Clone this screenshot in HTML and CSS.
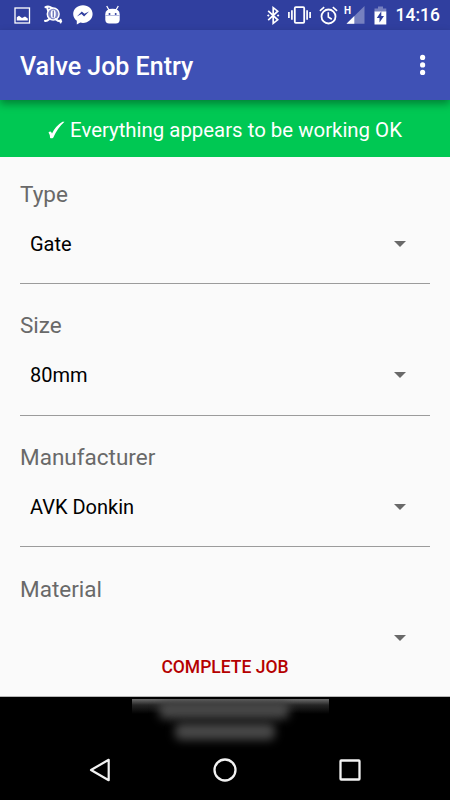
FILE: index.html
```
<!DOCTYPE html>
<html lang="en">
<head>
    <meta charset="utf-8">
    <meta name="viewport" content="width=device-width, initial-scale=1">
    <title>Valve Job Entry</title>
    <link rel="stylesheet" href="styles.css">
</head>
<body>
<div class="screen">
    <!-- status bar -->
    <div class="status-bar">
        <div class="notifications">
            <svg class="icon-image" width="17" height="17" viewBox="0 0 17 17">
                <rect x="1" y="1" width="14.5" height="15" fill="none" stroke="#fff" stroke-width="1.3"/>
                <path fill="#fff" d="M2.8 13.5V10.3L5 8.7L8 11L11 9.5L13.8 11.5V13.5Z"/>
            </svg>
            <svg class="icon-tool" width="20" height="20" viewBox="0 0 20 20">
                <circle cx="10.2" cy="9" r="5.9" fill="#8088c8" stroke="#fff" stroke-width="1.5"/>
                <ellipse cx="10.2" cy="9" rx="2.5" ry="4.2" fill="#fff"/>
                <path d="M10.2 5.5V12.5" stroke="#303f9f" stroke-width="1"/>
                <path fill="none" stroke="#fff" stroke-width="2" stroke-linecap="round" d="M2.5 2.2C5 .8 7.5 2 9 3M2 15.8C4 16.5 5.2 15 6.5 13.8M12.5 14C14 15.5 15.5 16.5 18.2 16.2M17.6 14.8V17.5M4 2.2L5 5.5"/>
            </svg>
            <svg class="icon-messenger" width="20" height="20" viewBox="0 0 20 20">
                <path fill="#fff" d="M10 .2C4.5.2.2 4.1.2 9C.2 11.8 1.6 14.2 3.8 15.8V19.6L7.3 17.5C8.2 17.8 9.1 17.9 10 17.9C15.5 17.9 19.6 13.9 19.6 9C19.6 4.1 15.5.2 10 .2Z"/>
                <path fill="#303f9f" d="M3.9 11.6L8.8 6.4L11.4 8.8L16 6.4L11.1 11.6L8.5 9.1Z"/>
            </svg>
            <svg class="icon-android" width="15" height="19" viewBox="0 0 15 19">
                <path stroke="#fff" stroke-width="1.3" d="M1.7 1L4 5M13.3 1L11 5"/>
                <path fill="#fff" d="M.3 9.2Q.3 3.7 7.5 3.7Q14.7 3.7 14.7 9.2V14.5Q14.7 18.4 10.8 18.4H4.2Q.3 18.4.3 14.5Z"/>
                <path stroke="#a3a9d7" stroke-width=".8" d="M.3 10.5H14.7"/>
                <circle cx="4.5" cy="9" r="1" fill="#303f9f"/>
                <circle cx="10.7" cy="9" r="1" fill="#303f9f"/>
            </svg>
        </div>
        <div class="system">
            <svg class="icon-bluetooth" width="13" height="19" viewBox="0 0 13 19">
                <path fill="none" stroke="#fff" stroke-width="1.7" d="M1.2 4.8L10.7 13.8L6.2 17.3V1.7L10.7 5.2L1.2 14.2"/>
                <path fill="#fff" d="M0 9.5L1.3 8.2L2.6 9.5L1.3 10.8ZM9.8 9.5L11.1 8.2L12.4 9.5L11.1 10.8Z"/>
            </svg>
            <svg class="icon-vibrate" width="23" height="18" viewBox="0 0 23 18">
                <rect x="6.8" y="1.2" width="9.4" height="15.6" rx="1" fill="none" stroke="#fff" stroke-width="1.8"/>
                <path stroke="#fff" stroke-width="1.7" d="M.9 6V12M3.9 4.2V13.8M19.1 4.2V13.8M22.1 6V12"/>
            </svg>
            <svg class="icon-alarm" width="19" height="19" viewBox="0 0 19 19">
                <circle cx="9.5" cy="10.5" r="7" fill="none" stroke="#fff" stroke-width="1.8"/>
                <path fill="none" stroke="#fff" stroke-width="1.6" d="M9.3 6.3V11L12.8 13.2M.9 4.8L5.2 1.2M18.1 4.8L13.8 1.2"/>
            </svg>
            <div class="signal">
                <span class="signal-type">H</span>
                <svg width="19" height="18" viewBox="0 0 19 18">
                    <path fill="#7680bf" d="M18.5 0V17.7H.5Z"/>
                    <path fill="#fff" d="M8.3 10V17.7H.5Z"/>
                </svg>
            </div>
            <svg class="icon-battery" width="13" height="19" viewBox="0 0 13 19">
                <path fill="#7680bf" d="M4 .5H9V2.5H12.3V6H.5V2.5H4Z"/>
                <path fill="#fff" d="M.5 5.5H12.3V18.5H.5Z"/>
                <path fill="#303f9f" d="M7.3 5.2V10H10L5.5 16.5V12H2.8Z"/>
            </svg>
            <span class="clock">14:16</span>
        </div>
    </div>

    <!-- toolbar -->
    <div class="toolbar">
        <h1>Valve Job Entry</h1>
        <svg class="overflow" width="8" height="24" viewBox="0 0 8 24" fill="#fff">
            <circle cx="3.6" cy="4.4" r="2.6"/>
            <circle cx="3.6" cy="11.9" r="2.6"/>
            <circle cx="3.6" cy="19.4" r="2.6"/>
        </svg>
    </div>

    <div class="banner">
        <svg class="tick" width="17" height="18" viewBox="0 0 17 18">
            <path fill="#fff" d="M.5 11.4Q2.9 9.2 4 12.6Q7.5 5 14.5.8H16.5Q9.7 6.8 5.2 16.7Q3.7 17.7 2.1 16.9Q1.8 12.8.5 11.4Z"/>
        </svg>
        <span>Everything appears to be working OK</span>
    </div>

    <!-- form -->
    <div class="form">
        <div class="field">
            <div class="label">Type</div>
            <div class="spinner"><span>Gate</span><i class="arrow"></i></div>
        </div>
        <div class="field">
            <div class="label">Size</div>
            <div class="spinner"><span>80mm</span><i class="arrow"></i></div>
        </div>
        <div class="field">
            <div class="label">Manufacturer</div>
            <div class="spinner"><span>AVK Donkin</span><i class="arrow"></i></div>
        </div>
        <div class="field">
            <div class="label">Material</div>
            <div class="spinner"><span></span><i class="arrow"></i></div>
        </div>
        <div class="complete">COMPLETE JOB</div>
    </div>

    <!-- system area -->
    <div class="footer">
        <div class="toast">
            <div class="smudge wide"></div>
            <div class="smudge"></div>
        </div>
        <div class="nav">
            <svg width="24" height="26" viewBox="0 0 24 26">
                <path fill="none" stroke="#f2f2f2" stroke-width="2.2" stroke-linejoin="round" d="M3 13L20.7 2.8V23.2Z"/>
            </svg>
            <svg width="24" height="26" viewBox="0 0 24 26">
                <circle cx="12" cy="13" r="10.5" fill="none" stroke="#f2f2f2" stroke-width="2.3"/>
            </svg>
            <svg width="24" height="26" viewBox="0 0 24 26">
                <rect x="2.5" y="3.5" width="19" height="19" rx=".7" fill="none" stroke="#f2f2f2" stroke-width="2.3"/>
            </svg>
        </div>
    </div>
</div>
</body>
</html>
```
FILE: styles.css
```
* {
    margin: 0;
    padding: 0;
    box-sizing: border-box;
}
body {
    background: #000;
    font-family: Roboto, "Liberation Sans", sans-serif;
}
svg {
    display: block;
    flex-shrink: 0;
}
.screen {
    display: flex;
    flex-direction: column;
    width: 450px;
    height: 800px;
    overflow: hidden;
}

/* status bar */
.status-bar {
    display: flex;
    justify-content: space-between;
    height: 30px;
    padding: 0 10px 0 14px;
    background: #303f9f;
    color: #fff;
}
.notifications, .system {
    display: flex;
    align-items: center;
}
.icon-tool {margin-left: 12px;}
.icon-messenger {margin-left: 10px;}
.icon-android {margin: -1px 0 0 12px;}
.icon-vibrate {margin-left: 8px;}
.icon-alarm {margin-left: 8px;}
.icon-battery {margin-left: 9px;}
.signal {
    display: flex;
    align-items: flex-start;
    margin-left: 6px;
}
.signal svg {margin-left: -6px;}
.signal-type {
    width: 8px;
    font-size: 10px;
    line-height: 9px;
    font-weight: 700;
}
.clock {
    width: 45px;
    margin-left: 8px;
    font-size: 17.5px;
    font-weight: 500;
    line-height: 32px;
    text-align: right;
    white-space: nowrap;
}

/* toolbar */
.toolbar {
    display: flex;
    align-items: center;
    justify-content: space-between;
    position: relative;
    z-index: 1;
    height: 70px;
    padding: 0 23px 0 20px;
    background: #3f51b5;
    box-shadow: 0 4px 8px rgba(0, 0, 0, .35);
    color: #fff;
}
.toolbar h1 {
    padding-top: 2px;
    font-size: 25px;
    font-weight: 500;
}
.banner {
    display: flex;
    align-items: center;
    justify-content: center;
    height: 57px;
    padding-top: 3px;
    background: #00c853;
    color: #fff;
    font-size: 20.4px;
    white-space: nowrap;
}
.tick {margin-right: 5px;}

/* form */
.form {
    position: relative;
    height: 540px;
    padding: 0 20px;
    overflow: hidden;
    background: #fafafa;
    border-bottom: 1px solid #b8b8b8;
}
.field {
    height: 131.6px;
    padding-top: 21.8px;
}
.label {
    color: #696969;
    font-size: 22.5px;
    line-height: 30px;
}
.spinner {
    display: flex;
    align-items: center;
    justify-content: space-between;
    height: 75.2px;
    padding: 0 24px 4.6px 10px;
    border-bottom: 1px solid #9b9b9b;
    color: #000;
    font-size: 20px;
}
.arrow {
    width: 0;
    height: 0;
    border: 6px solid transparent;
    border-top-color: #696969;
    border-bottom: 0;
}
/* action button floating over the scrolled fields */
.complete {
    position: absolute;
    left: 0;
    right: 0;
    bottom: 0;
    height: 45px;
    padding-top: 6px;
    background: #fafafa;
    color: #b50000;
    font-size: 17.5px;
    font-weight: 500;
    line-height: 20px;
    text-align: center;
}

/* blurred strip and navigation keys */
.footer {
    flex: 1;
    background: #000;
}
.toast {
    width: 197px;
    height: 56px;
    margin: 2px auto 0 132px;
    padding-top: 2px;
    overflow: hidden;
    background: linear-gradient(#6c6c6c, #252525 6px, #000 15px);
}
.smudge {
    width: 100px;
    height: 17px;
    margin: 4px 0 0 43px;
    border-radius: 6px;
    background: #484848;
    filter: blur(5px);
}
.smudge.wide {
    width: 130px;
    height: 18px;
    margin: 0 0 0 27px;
}
.nav {
    display: flex;
    justify-content: space-between;
    padding: 2px 88px 0;
}
```
